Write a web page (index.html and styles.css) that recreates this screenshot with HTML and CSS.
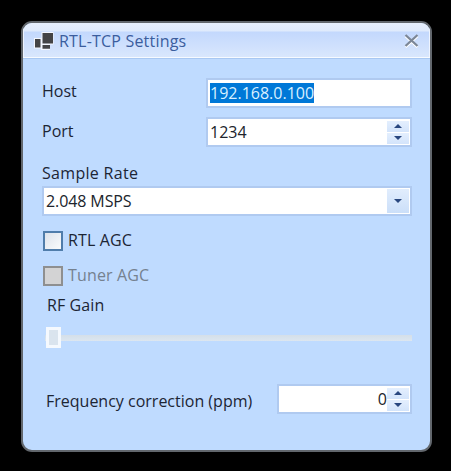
FILE: index.html
```html
<!DOCTYPE html>
<html lang="en">
<head>
<meta charset="utf-8">
<title>RTL-TCP Settings</title>
<link rel="stylesheet" href="styles.css">
</head>
<body>
<main class="window">
  <header class="titlebar">
    <svg class="app-icon" width="20" height="19" viewBox="0 0 20 19">
      <path d="M0 6h7.500V0h12v12.500H16V18H7v-1.500H0z" fill="#f4f7ff"/>
      <path d="M1 7h5.500v8.500H1zM8.500 1h10.500v10.500h-10.500zM8.500 13H16v3.800H8.500z" fill="#444446"/>
    </svg>
    <h1 class="title">RTL-TCP Settings</h1>
    <svg class="close" width="15" height="15" viewBox="0 0 15 15">
      <path d="M1.500 3l12 11M13.500 3l-12 11" stroke="#fff" stroke-width="2.600"/>
      <path d="M1.500 2l12 11M13.500 2l-12 11" stroke="#7c8797" stroke-width="2.300"/>
    </svg>
  </header>
  <form class="body">
    <div class="row">
      <label>Host</label>
      <div class="field wide"><span class="selected">192.168.0.100</span></div>
    </div>
    <div class="row row-port">
      <label>Port</label>
      <div class="field wide"><span class="value">1234</span>
        <span class="spinner"><i class="step"><b class="up"></b></i><i class="step"><b class="down"></b></i></span>
      </div>
    </div>
    <label class="rate-label">Sample Rate</label>
    <div class="field combo"><span class="value rate-value">2.048 MSPS</span><span class="drop"><b class="down"></b></span></div>
    <div class="check"><i class="box"></i><span>RTL AGC</span></div>
    <div class="check disabled"><i class="box"></i><span>Tuner AGC</span></div>
    <label class="gain-label">RF Gain</label>
    <div class="slider"><i class="thumb"></i></div>
    <div class="row row-ppm">
      <label>Frequency correction (ppm)</label>
      <div class="field ppm"><span class="value right">0</span>
        <span class="spinner"><i class="step"><b class="up"></b></i><i class="step"><b class="down"></b></i></span>
      </div>
    </div>
  </form>
</main>
</body>
</html>
```
FILE: styles.css
```css
* { box-sizing: border-box; }
body { margin: 0; width: 451px; height: 471px; padding: 21px 0 0 21px; background: #000; overflow: hidden;
  font: 16px/20px "Open Sans", "Noto Sans", sans-serif; color: #1c2534; }
.window { width: 411px; height: 431px; border: 2px solid #62676d; border-radius: 11px; background: #bfdbff; overflow: hidden; }
.titlebar { height: 36px; display: flex; align-items: center; padding: 0 11px;
  background: linear-gradient(#e7effd 0, #dfeafc 8px, #c3d8fd 9px, #d9e7fd 34px);
  border-bottom: 1px solid #a9c8f2; box-shadow: inset 0 -1px #f6faff, inset 1px 0 #eef4ff, inset -1px 0 #eef4ff; }
.app-icon { margin-top: 2px; }
.title { margin: 0 auto 0 5px; font: inherit; color: #3b5d9d; letter-spacing: .2px; }
.body { margin: 0; padding: 19px 18px 0 19px; display: flex; flex-direction: column; }
label, .check span, .value, .selected, .title { white-space: nowrap; }
.row { display: flex; justify-content: space-between; height: 30px; }
.row label { margin-top: 3px; }
.row-port { margin-top: 9px; }
.row-port label { margin-top: 4px; }
.field { height: 30px; border: 2px solid #b0caf0; background: #fff; display: flex; align-items: center; padding: 0 1px 0 2px; color: #20242c; }
.wide { width: 206px; }
.value { flex: 1; }
.selected { background: #0078d7; color: #d9f0ff; height: 20px; line-height: 20px; width: 104px; margin-top: -1px; }
.spinner { width: 22px; height: 23px; display: flex; flex-direction: column; gap: 1px; }
.step { flex: 1; display: flex; align-items: center; justify-content: center; background: linear-gradient(#e4effe, #d3e4fb); }
.up, .down { width: 0; height: 0; border: 4px solid transparent; }
.up { border-top: 0; border-bottom-color: #29477f; }
.down { border-bottom: 0; border-top-color: #29477f; }
.rate-label { margin-top: 16px; height: 23px; letter-spacing: .3px; }
.rate-value { letter-spacing: -.1px; }
.drop { width: 22px; height: 24px; display: flex; align-items: center; justify-content: center; background: linear-gradient(#e1edfd, #cbdff9); }
.check { height: 20px; margin: 15px 0 0 1px; display: flex; gap: 5px; letter-spacing: .15px; }
.check span { margin-top: -1px; }
.box { width: 20px; height: 20px; border: 2px solid #507dab; background: linear-gradient(135deg, #dde3ec, #fafbfc); }
.disabled { color: #75818f; }
.disabled .box { border-color: #8e8f90; background: #d3d3d4; }
.gain-label { margin: 9px 0 0 5px; height: 20px; letter-spacing: .1px; }
.slider { height: 21px; margin: 12px 0 0 3px; padding-left: 1px; background: linear-gradient(#d4dfe9, #dce6f0) 0 8px / 100% 6px no-repeat; }
.thumb { display: block; width: 15px; height: 21px; border: 3px solid #f5f9fe; background: #dae4ee; }
.row-ppm { margin: 36px 0 0 4px; }
.row-ppm label { margin-top: 7px; }
.ppm { width: 135px; }
.right { text-align: right; }
```
